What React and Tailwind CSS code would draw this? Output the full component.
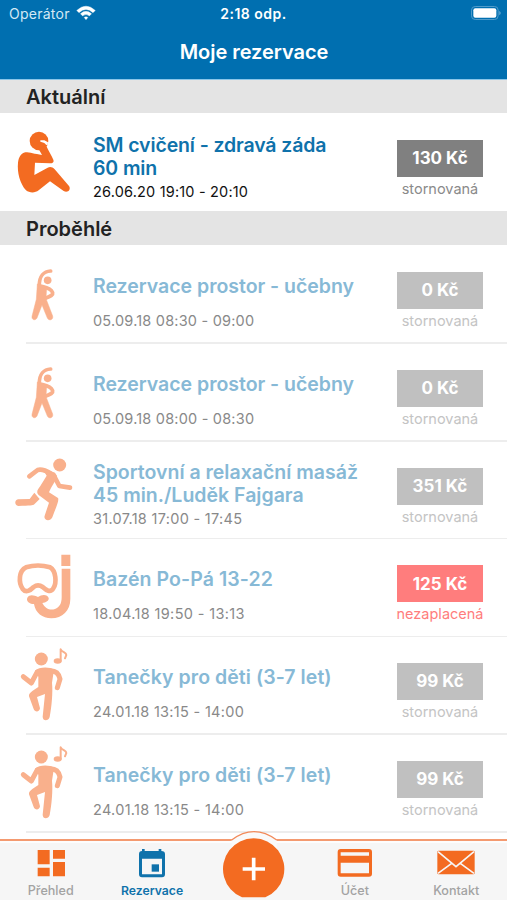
import React from "react";

const round = { fill: "none", stroke: "currentColor", strokeLinecap: "round", strokeLinejoin: "round" };

function SitUp() {
  return (
    <g transform="translate(0 21)">
      <circle cx="117" cy="63" r="28" fill="currentColor" />
      <path d="M76 97 C90 97 104 102 126 105 L116 87 L138 76 C145 92 155 108 160 119 C163 127 157 130 150 130 L105 128 L103 165 L143 143 C150 139 158 141 164 148 L207 198 C214 209 203 220 191 213 L150 184 L116 211 C105 220 88 219 78 211 C60 190 51 158 54 128 C56 112 63 99 76 97Z" fill="currentColor" />
      <path d="M121 61 L133 61 L144 67 L143 76 L138 74 C135 68 128 67 121 65Z" fill="#fff" />
    </g>
  );
}

function Stretch() {
  return (
    <g transform="translate(0 45)">
      <circle cx="143" cy="61" r="11.5" fill="currentColor" />
      <path d="M152 33 C132 34 117 48 118 78" {...round} strokeWidth="11" />
      <path d="M112 72 C119 68 126 76 140 82 L138 116 L158 168 C161 180 147 184 142 174 L126 135 L111 174 C106 183 94 180 96 169 L109 118Z" fill="currentColor" stroke="currentColor" strokeWidth="1.5" />
      <path d="M128 80 C142 83 154 88 158 98 C160 106 150 109 138 114" {...round} strokeWidth="11" />
    </g>
  );
}

function Runner() {
  return (
    <g transform="translate(0 -3)">
      <circle cx="179" cy="75" r="19.5" fill="currentColor" />
      <path d="M88 109 L113 90 C123 87 142 94 154 101 M160 104 L178 138 L210 143" {...round} strokeWidth="14" />
      <path d="M128 88 C145 91 166 96 171 108 C170 119 151 145 147 157 L174 174 C178 181 168 202 157 232 C151 246 129 242 134 227 L147 188 L116 165 C108 157 112 149 121 138 L140 107Z" fill="currentColor" />
      <path d="M103 158 C109 165 115 172 119 177 L103 193 C99 197 90 197 55 198 C43 196 43 180 54 178 L89 177Z" fill="currentColor" />
    </g>
  );
}

function Snorkel() {
  return (
    <g transform="translate(0 4)">
      <path d="M78 84 Q114 73 150 84 C168 94 171 130 160 147 C151 162 139 153 128 143 Q114 133 101 143 C91 153 78 162 68 149 C55 130 56 94 78 84Z" {...round} strokeWidth="14" />
      <path d="M184 46 H211 V80 H184Z M185 88 H211 V179 C211 214 187 237 154 237 C127 237 106 220 102 194 C86 194 78 184 82 175 C89 164 101 167 114 173 C126 164 143 165 146 176 C148 184 137 190 127 191 C136 209 151 214 165 209 C179 204 185 192 185 174Z" fill="currentColor" />
    </g>
  );
}

function Dancer() {
  return (
    <g transform="translate(0 10)">
      <circle cx="124" cy="59" r="19.5" fill="currentColor" />
      <path d="M70 112 L94 131 L111 99 M151 94 Q175 94 180 119 L172 145" {...round} strokeWidth="15" />
      <path d="M105 94 C116 82 149 81 162 91 L156 130 C159 158 155 202 149 233 C145 246 128 246 128 232 L135 164 L111 173 L120 207 C119 219 104 219 101 209 L87 171 C86 164 90 160 98 154 L115 143 L115 112Z" fill="currentColor" />
      <ellipse cx="173" cy="65" rx="12" ry="8" fill="currentColor" />
      <path d="M182 65 V30 C186 39 199 39 199 47 L195 57" {...round} strokeWidth="6" />
    </g>
  );
}

const past = [
  { icon: Stretch, title: ["Rezervace prostor - učebny"], track: "tracking-[-0.02px]", date: "05.09.18 08:30 - 09:00", dateTrack: "tracking-[0.2px]", price: "0 Kč" },
  { icon: Stretch, title: ["Rezervace prostor - učebny"], track: "tracking-[-0.02px]", date: "05.09.18 08:00 - 08:30", dateTrack: "tracking-[0.2px]", price: "0 Kč" },
  { icon: Runner, title: ["Sportovní a relaxační masáž", "45 min./Luděk Fajgara"], track: "tracking-[0px]", date: "31.07.18 17:00 - 17:45", dateTrack: "tracking-[0.3px]", price: "351 Kč" },
  { icon: Snorkel, title: ["Bazén Po-Pá 13-22"], track: "tracking-[0.08px]", date: "18.04.18 19:50 - 13:13", dateTrack: "tracking-[0.36px]", price: "125 Kč", unpaid: true },
  { icon: Dancer, title: ["Tanečky pro děti (3-7 let)"], track: "tracking-[0.06px]", date: "24.01.18 13:15 - 14:00", dateTrack: "tracking-[0.3px]", price: "99 Kč" },
  { icon: Dancer, title: ["Tanečky pro děti (3-7 let)"], track: "tracking-[0.06px]", date: "24.01.18 13:15 - 14:00", dateTrack: "tracking-[0.3px]", price: "99 Kč" },
];

function Row({ item, current }) {
  const Icon = item.icon;
  const two = item.title.length > 1;
  const priceBg = item.unpaid ? "bg-[#ff7d7d]" : current ? "bg-[#808080]" : "bg-[#c0c0c0]";
  const status = item.unpaid ? "text-[#ff7d7d]" : current ? "text-[#8a8a8a]" : "text-[#c4c4c4]";
  return (
    <div className={`flex shrink-0 ${current ? "h-[98px]" : "h-[97.8px]"}`}>
      <svg viewBox="0 0 279 294" className={`h-[98px] w-[93px] shrink-0 ${current ? "text-[#f36b21]" : "text-[#f9b08c]"}`}>
        <Icon />
      </svg>
      <div className={`flex grow flex-col whitespace-nowrap ${two ? "pt-[20.5px]" : "pt-[30px]"}`}>
        <div className={`text-[19.5px] font-semibold ${two ? "leading-[23px]" : "leading-[23.5px]"} ${item.track} ${current ? "text-[#0f72ab]" : "text-[#87b9d6]"}`}>
          {item.title.map((line) => <div key={line}>{line}</div>)}
        </div>
        <div className={`text-[14.5px] leading-5 ${item.dateTrack} ${two ? "mt-[2px]" : "mt-[12.5px]"} ${current ? "text-[#111]" : "text-[#898989]"}`}>{item.date}</div>
      </div>
      <div className="mr-6 flex w-[86px] shrink-0 flex-col items-center pt-[27px]">
        <div className={`flex h-[37px] w-full items-center justify-center pt-px text-[17px] font-bold text-white ${priceBg}`}>{item.price}</div>
        <div className={`mt-[2px] text-[14.5px] leading-5 whitespace-nowrap ${status}`}>{item.unpaid ? "nezaplacená" : "stornovaná"}</div>
      </div>
    </div>
  );
}

function Section({ first, children }) {
  return (
    <h2 className={`flex shrink-0 items-center bg-[#e4e4e4] pl-[26px] text-[20px] font-semibold text-[#222] ${first ? "h-[33px] pt-px" : "h-[34px] pt-[2px]"}`}>
      {children}
    </h2>
  );
}

function Tab({ label, active, children }) {
  return (
    <div className={`flex w-[101.4px] flex-col items-center ${active ? "text-[#0f72ab]" : "text-[#f36b21]"}`}>
      <svg viewBox="0 0 120 96" className="mt-[3px] h-8 w-10 overflow-visible">{children}</svg>
      <span className={`mt-[7px] leading-4 ${active ? "text-[12.2px] font-semibold" : "text-[12.6px] font-medium text-[#a3a3a3]"}`}>{label}</span>
    </div>
  );
}

export default function App() {
  return (
    <div className="flex h-[900px] w-[507px] flex-col overflow-hidden bg-white font-['Inter','Liberation_Sans',sans-serif]">
      <header className="h-20 shrink-0 border-b border-[#8ac6e9] bg-[#006fb0] text-white">
        <div className="grid h-7 grid-cols-3 items-center pr-[6px] pl-[9px] text-[14px] leading-5">
          <div className="flex items-center gap-[6px] text-[#d4e9f5]">
            <span className="tracking-[0.25px]">Operátor</span>
            <svg viewBox="0 0 54 42" className="mb-0.5 h-[16px] w-[20px] text-white">
              <path d="M2 14 Q27 -9 52 14 L46 20 Q27 3 8 20Z M12 23 Q27 10 42 23 L36 29 Q27 21 18 29Z M22 33 Q27 29 32 33 L27 39Z" fill="currentColor" stroke="currentColor" strokeLinejoin="round" />
            </svg>
          </div>
          <span className="pr-[3px] text-center font-semibold tracking-[0.5px]">2:18 odp.</span>
          <svg viewBox="0 0 90 42" className="mb-0.5 h-[14px] w-[30px] justify-self-end">
            <rect x="1.5" y="1.5" width="80" height="39" rx="11" fill="none" stroke="#4f9bca" strokeWidth="3" />
            <rect x="7" y="7" width="69" height="28" rx="6" fill="white" />
            <path d="M85 14 Q93 21 85 28Z" fill="#70afd6" />
          </svg>
        </div>
        <h1 className="pl-px text-center text-[20px] leading-[48px] font-semibold tracking-[-0.05px]">Moje rezervace</h1>
      </header>
      <main className="flex min-h-0 grow flex-col overflow-hidden">
        <div className="flex shrink-0 flex-col">
          <Section first>Aktuální</Section>
          <Row current item={{ icon: SitUp, title: ["SM cvičení - zdravá záda", "60 min"], track: "tracking-[-0.12px]", date: "26.06.20 19:10 - 20:10", dateTrack: "tracking-[0.18px]", price: "130 Kč" }} />
          <Section>Proběhlé</Section>
          {past.map((item, i) => (
            <div key={i} className="relative shrink-0">
              <Row item={item} />
              <div className="absolute right-0 bottom-[-1px] left-[26px] h-[1.5px] bg-[#ededed]" />
            </div>
          ))}
        </div>
      </main>
      <nav className="relative flex h-[61px] shrink-0 border-t-2 border-[#f49a70] bg-[#f6f6f6] shadow-[inset_0_2px_0_#fdfdfd]">
        <Tab label="Přehled">
          <path d="M20 18H56V61H20Z M66 18H102V44H66Z M20 71H56V97H20Z M66 54H102V97H66Z" fill="currentColor" />
        </Tab>
        <Tab label="Rezervace" active>
          <path fillRule="evenodd" d="M30 15H38V21H80V15H88V21Q99 21 99 30V91Q99 100 90 100H30Q21 100 21 91V30Q21 21 30 21Z M30 44V91H90V44Z" fill="currentColor" />
          <path d="M59 61H81V83H59Z" fill="currentColor" />
        </Tab>
        <div className="w-[101.4px]" />
        <Tab label="Účet">
          <path fillRule="evenodd" d="M17 15H102Q111 15 111 24V89Q111 98 102 98H17Q8 98 8 89V24Q8 15 17 15Z M17 25V35H102V25Z M17 56V88H102V56Z" fill="currentColor" />
        </Tab>
        <Tab label="Kontakt">
          <rect x="4" y="20" width="112" height="71" rx="4" fill="currentColor" />
          <path d="M6 23L60 68L114 23M6 88L47 58M114 88L73 58" fill="none" stroke="#f6f6f6" strokeWidth="5" />
        </Tab>
        <svg viewBox="0 0 204 204" className="absolute top-[-11px] left-[220px] h-[68px] w-[68px]">
          <path d="M35 29Q102 -19 170 29V60H35Z" fill="#fafafa" />
          <path d="M35 30Q68 5 102 5Q136 5 170 30" fill="none" stroke="#f28b5b" strokeWidth="4" />
          <path d="M66 202A92 92 0 1 1 136 202Z" fill="#f36b21" />
          <path d="M68 117H135M101 83V151" fill="none" stroke="white" strokeWidth="11" />
        </svg>
      </nav>
    </div>
  );
}
